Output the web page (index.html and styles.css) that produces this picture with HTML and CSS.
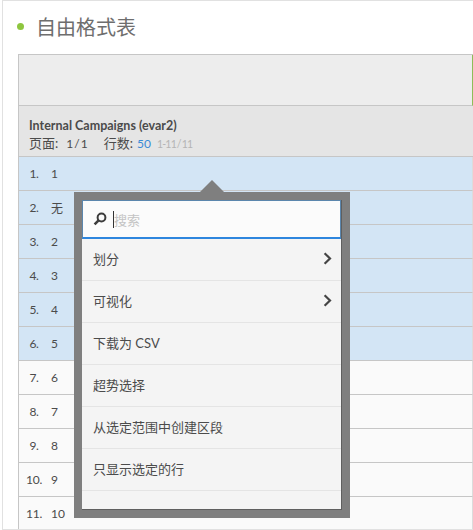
FILE: index.html
```html
<!DOCTYPE html>
<html lang="zh">
  <head>
    <meta charset="UTF-8" />
    <title>自由格式表</title>
    <link rel="stylesheet" href="styles.css">
  </head>
  <body>
    <div class="frame">
      <h1 class="title"><span class="dot"></span>自由格式表</h1>
      <div class="table">
        <div class="drop-zone"></div>
        <div class="table-head">
          <div class="dim-name">Internal Campaigns (evar2)</div>
          <div class="dim-meta">
            <span>页面:</span><span class="pages">1 / 1</span>
            <span class="rows-label">行数:</span><span class="rows-count">50</span><span class="rows-range">1-11 / 11</span>
          </div>
        </div>
        <div class="row selected"><span class="num">1.</span><span>1</span></div>
        <div class="row selected"><span class="num">2.</span><span>无</span></div>
        <div class="row selected"><span class="num">3.</span><span>2</span></div>
        <div class="row selected"><span class="num">4.</span><span>3</span></div>
        <div class="row selected"><span class="num">5.</span><span>4</span></div>
        <div class="row selected"><span class="num">6.</span><span>5</span></div>
        <div class="row"><span class="num">7.</span><span>6</span></div>
        <div class="row"><span class="num">8.</span><span>7</span></div>
        <div class="row"><span class="num">9.</span><span>8</span></div>
        <div class="row"><span class="num">10.</span><span>9</span></div>
        <div class="row"><span class="num">11.</span><span>10</span></div>
      </div>
    </div>

    <div class="popup">
      <div class="popup-arrow"></div>
      <div class="popup-inner">
        <div class="search">
          <svg class="search-icon" width="14" height="14" viewBox="0 0 14 14">
            <circle cx="8.5" cy="5.5" r="3.9" fill="none" stroke="#3c3c3c" stroke-width="2" />
            <path d="M5.6 8.4 1.6 12.4" stroke="#3c3c3c" stroke-width="2.6" />
          </svg>
          <span class="caret"></span>
          <span class="placeholder">搜索</span>
        </div>
        <div class="item">划分
          <svg class="chevron" width="9" height="13" viewBox="0 0 9 13">
            <path d="M1.6 1.2 7 6.5 1.6 11.8" fill="none" stroke="#444" stroke-width="2.2" />
          </svg>
        </div>
        <div class="item">可视化
          <svg class="chevron" width="9" height="13" viewBox="0 0 9 13">
            <path d="M1.6 1.2 7 6.5 1.6 11.8" fill="none" stroke="#444" stroke-width="2.2" />
          </svg>
        </div>
        <div class="item">下载为 CSV</div>
        <div class="item">超势选择</div>
        <div class="item">从选定范围中创建区段</div>
        <div class="item">只显示选定的行</div>
      </div>
    </div>
  </body>
</html>
```

FILE: styles.css
```css
html,
body {
  margin: 0;
  padding: 0;
  height: 530px;
  overflow: hidden;
  background: #fff;
}
body {
  position: relative;
  font-family: Lato, "Noto Sans CJK SC", sans-serif;
  color: #4b4b4b;
}
.frame {
  box-sizing: border-box;
  height: 530px;
  margin-left: 2px;
  padding: 13px 0 0 15px;
  border-top: 1px solid #e1e1e1;
  border-left: 1px solid #e1e1e1;
  border-bottom: 1px solid #e1e1e1;
}
.title {
  display: flex;
  align-items: center;
  height: 24px;
  margin: 0 0 16px 0;
  font-size: 20px;
  font-weight: 400;
  color: #6e6e6e;
}
.dot {
  width: 7px;
  height: 7px;
  margin: 0 12px 0 -1px;
  border-radius: 50%;
  background: #8ec63f;
}
.table {
  border-left: 1px solid #c6c6c6;
  border-top: 1px solid #c6c6c6;
}
.drop-zone {
  box-sizing: border-box;
  height: 51px;
  border-bottom: 1px solid #c6c6c6;
  border-right: 1px solid #8ebd58;
  background: #ededed;
}
.table-head {
  box-sizing: border-box;
  height: 51px;
  padding: 13px 0 0 10px;
  border-bottom: 1px solid #c6c6c6;
  background: #e5e5e5;
  font-size: 13px;
  line-height: 14px;
}
.dim-name {
  font-size: 12.5px;
  font-weight: 700;
}
.dim-meta {
  display: flex;
  align-items: baseline;
  margin-top: 3px;
}
.pages {
  margin-left: 8px;
  font-size: 12px;
  word-spacing: -2px;
}
.rows-label {
  margin-left: 16px;
}
.rows-count {
  margin-left: 4px;
  font-size: 12px;
  color: #3a8ad6;
}
.rows-range {
  margin-left: 6px;
  color: #b4b4b4;
  font-size: 10.5px;
  letter-spacing: -0.8px;
  word-spacing: -1px;
}
.row {
  box-sizing: border-box;
  display: flex;
  align-items: center;
  height: 34px;
  border-bottom: 1px solid #c6c6c6;
  border-right: 1px solid #dcdcdc;
  background: #fafafa;
  font-size: 12px;
}
.row.selected {
  background: #d3e5f5;
}
.row:last-child {
  height: 32px;
  padding-top: 1px;
  border-bottom: none;
}
.num {
  width: 30px;
  margin-right: 2px;
  text-align: center;
  letter-spacing: -0.3px;
}
.popup {
  position: absolute;
  left: 74px;
  top: 192px;
  box-sizing: border-box;
  width: 276px;
  height: 326px;
  border: 8px solid #7f7f7f;
}
.popup-arrow {
  position: absolute;
  left: 118px;
  top: -20px;
  width: 0;
  height: 0;
  border-left: 12px solid transparent;
  border-right: 12px solid transparent;
  border-bottom: 12px solid #7f7f7f;
}
.popup-inner {
  box-sizing: border-box;
  height: 310px;
  border-right: 1px solid #5f5f5f;
  border-bottom: 1px solid #5f5f5f;
  background: #f4f4f4;
}
.search {
  box-sizing: border-box;
  display: flex;
  align-items: center;
  height: 39px;
  padding-left: 10px;
  border: 1px solid #5b86ad;
  border-bottom: 2px solid #2e86de;
  background: #fbfbfb;
  font-size: 13px;
}
.search-icon {
  margin-right: 6px;
}
.caret {
  width: 1px;
  height: 17px;
  background: #333;
}
.placeholder {
  color: #c4c4c4;
}
.item {
  box-sizing: border-box;
  display: flex;
  align-items: center;
  justify-content: space-between;
  height: 42px;
  padding: 0 9px 2px 11px;
  border-bottom: 1px solid #e4e4e4;
  font-size: 13px;
}
```
